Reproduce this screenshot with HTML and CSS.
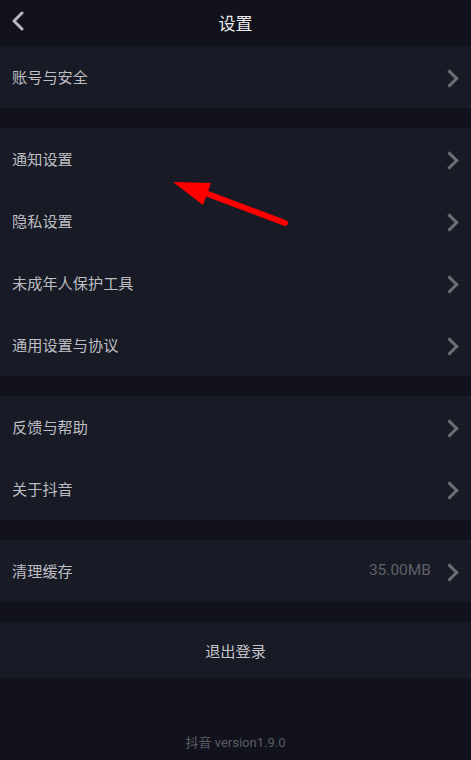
FILE: index.html
```html
<!DOCTYPE html>
<html lang="zh">
<head>
<meta charset="utf-8">
<title>设置</title>
<link rel="stylesheet" href="styles.css">
</head>
<body>
<div class="page">
  <header class="topbar">
    <svg class="back" width="14" height="20" viewBox="0 0 14 20"><path d="M11 2 L3 10 L11 18" fill="none" stroke="#b9b9bd" stroke-width="3" stroke-linecap="round" stroke-linejoin="round"/></svg>
    <h1 class="title">设置</h1>
  </header>

  <section class="group">
    <div class="row"><span class="label">账号与安全</span><span class="chev"></span></div>
  </section>

  <section class="group">
    <div class="row"><span class="label">通知设置</span><span class="chev"></span></div>
    <div class="row"><span class="label">隐私设置</span><span class="chev"></span></div>
    <div class="row"><span class="label">未成年人保护工具</span><span class="chev"></span></div>
    <div class="row"><span class="label">通用设置与协议</span><span class="chev"></span></div>
  </section>

  <section class="group">
    <div class="row"><span class="label">反馈与帮助</span><span class="chev"></span></div>
    <div class="row"><span class="label">关于抖音</span><span class="chev"></span></div>
  </section>

  <section class="group">
    <div class="row"><span class="label">清理缓存</span><span class="value">35.00MB</span><span class="chev"></span></div>
  </section>

  <section class="group">
    <div class="logout">退出登录</div>
  </section>

  <footer class="footer">抖音 version1.9.0</footer>

  <svg class="arrow" width="471" height="760" viewBox="0 0 471 760">
    <line x1="285" y1="223" x2="200" y2="191" stroke="#ff0000" stroke-width="6" stroke-linecap="round"/>
    <polygon points="173,182 211,183 203,205" fill="#ff0000"/>
  </svg>
</div>
</body>
</html>
```
FILE: styles.css
```css
* { box-sizing: border-box; }
html, body {
  margin: 0;
  padding: 0;
  background: #11121c;
}
body {
  font-family: "Noto Sans CJK SC", "Noto Sans", sans-serif;
  width: 471px;
  height: 760px;
  overflow: hidden;
}
.page {
  position: relative;
  width: 471px;
  height: 760px;
  display: flex;
  flex-direction: column;
  gap: 20px;
}
.topbar {
  height: 46px;
  display: flex;
  align-items: center;
  justify-content: center;
  position: relative;
  margin-bottom: -20px;
}
.back {
  position: absolute;
  left: 11px;
  top: 11px;
}
.title {
  margin: 0;
  font-size: 17px;
  font-weight: normal;
  color: #ececee;
  line-height: 1;
  margin-top: -2px;
}
.group {
  background: #181a25;
  display: flex;
  flex-direction: column;
}
.row {
  height: 62px;
  display: flex;
  align-items: center;
  padding: 0 14px 0 12px;
}
.label {
  flex: 1;
  font-size: 15.2px;
  color: #bdbec3;
  line-height: 1;
  margin-top: -1px;
}
.value {
  font-family: Roboto, "Noto Sans", sans-serif;
  font-size: 15.5px;
  color: #5f616a;
  margin-right: 15px;
  line-height: 1;
}
.chev {
  width: 11px;
  height: 17px;
  position: relative;
  margin-top: 1px;
}
.chev::before {
  content: "";
  position: absolute;
  width: 10px;
  height: 10px;
  border-top: 3px solid #6b6d75;
  border-right: 3px solid #6b6d75;
  transform: rotate(45deg);
  left: -3px;
  top: 3px;
}
.logout {
  height: 56px;
  display: flex;
  align-items: center;
  justify-content: center;
  font-size: 15.2px;
  color: #c4c5c9;
}
.footer {
  position: absolute;
  left: 0;
  right: 0;
  top: 733px;
  text-align: center;
  font-family: Roboto, "Noto Sans CJK SC", sans-serif;
  font-size: 13px;
  color: #5a5c65;
  line-height: 20px;
}
.arrow {
  position: absolute;
  left: 0;
  top: 0;
  pointer-events: none;
}
```
